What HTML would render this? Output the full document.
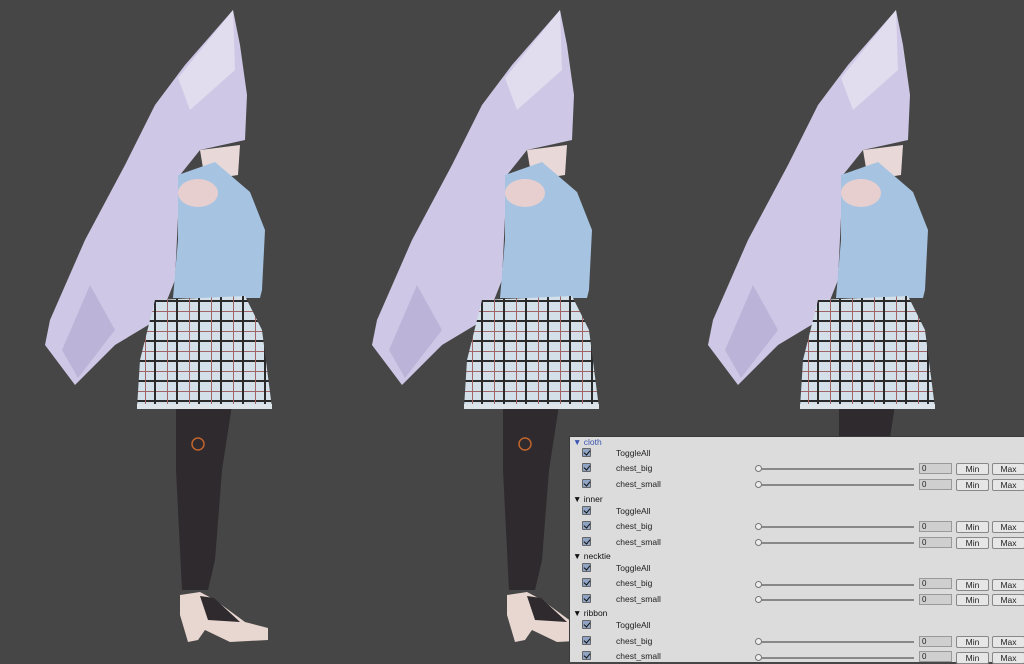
<!DOCTYPE html>
<html><head><meta charset="utf-8"><style>
*{margin:0;padding:0;box-sizing:border-box}
body{width:1024px;height:662px;overflow:hidden;background:#464646;position:relative;font-family:"Liberation Sans",sans-serif}
svg.s{position:absolute;left:0;top:0}
#p{position:absolute;left:569px;top:436px;width:455px;height:226px;background:#dcdcdc;border-left:1px solid #3a3a3a;border-top:1px solid #3a3a3a}
.a{position:absolute;font-size:8.5px;color:#222;line-height:10px;white-space:nowrap}
.h{left:3px;color:#111}
.h.b{color:#3a55b0}
.cb{position:absolute;left:12px;width:9px;height:9px;background:#8fa3c4;border:1px solid #666;border-radius:1px}
.cb::after{content:"";position:absolute;left:2px;top:0px;width:3px;height:5px;border:solid #111;border-width:0 1.5px 1.5px 0;transform:rotate(40deg)}
.sl{position:absolute;left:188px;width:156px;height:2px;background:#888}
.th{position:absolute;left:185px;width:7px;height:7px;border-radius:50%;background:#eee;border:1px solid #777}
.f{position:absolute;left:349px;width:33px;height:11px;background:#cfcfcf;border:1px solid #999;font-size:8px;padding-left:2px;line-height:9px;color:#222}
.bt{position:absolute;width:33px;height:12px;background:#e6e6e6;border:1px solid #888;border-radius:2px;font-size:8.5px;text-align:center;line-height:10px;color:#222}
</style></head><body>
<svg class="s" width="1024" height="662" viewBox="0 0 1024 662">
<defs>
<pattern id="pl" width="22" height="20" patternUnits="userSpaceOnUse">
<rect width="22" height="20" fill="#d3e0ea"/>
<rect x="0" y="0" width="22" height="2" fill="#2a2a2a"/>
<rect x="0" y="11" width="22" height="1" fill="#a06464"/>
<rect x="0" y="0" width="2" height="20" fill="#2a2a2a"/>
<rect x="13" y="0" width="1" height="20" fill="#a06464"/>
</pattern>
<g id="girl">
<path d="M233,10 L185,65 L155,105 L125,165 L85,240 L50,320 L45,345 L75,385 L115,345 L160,318 L175,280 L180,175 L200,150 L245,140 L247,95 L240,45 Z" fill="#cec7e5"/>
<path d="M90,285 L62,350 L78,378 L115,330 Z" fill="#bcb4d8"/>
<path d="M233,10 L235,70 L190,110 L178,78 Z" fill="#e2dcef"/>
<path d="M200,150 L240,145 L238,175 L205,180 Z" fill="#e8d8d8"/>
<path d="M178,175 L215,162 L250,192 L265,230 L262,290 L260,298 L173,298 L178,240 Z" fill="#a6c4e2"/>
<ellipse cx="198" cy="193" rx="20" ry="14" fill="#e8cfcf"/>
<path d="M232,405 L176,405 L176,470 L182,590 L208,590 L215,560 L222,470 Z" fill="#2e2a2d"/>
<path d="M155,300 L245,296 L262,330 L272,408 L137,408 L140,360 Z" fill="url(#pl)"/>
<path d="M137,404 L272,404 L272,409 L137,409 Z" fill="#dde4ea"/>
<circle cx="198" cy="444" r="6" fill="none" stroke="#c0642c" stroke-width="1.5"/>
<path d="M180,595 L200,592 L215,600 L245,622 L268,628 L268,640 L230,642 L205,630 L198,640 L188,642 L180,615 Z" fill="#e8d6d0"/>
<path d="M200,596 L214,598 L240,622 L208,620 Z" fill="#2e2a2d"/>
</g>
</defs>
<use href="#girl"/>
<use href="#girl" x="327"/>
<use href="#girl" x="663"/>
</svg>
<div id="p">
<div class="a h b" style="top:0px">▼ cloth</div>
<div class="cb" style="top:11px"></div><div class="a" style="left:46px;top:11px">ToggleAll</div>
<div class="cb" style="top:26px"></div><div class="a" style="left:46px;top:26px">chest_big</div>
<div class="sl" style="top:31px"></div><div class="th" style="top:28px"></div><div class="f" style="top:26px">0</div><div class="bt" style="left:386px;top:26px">Min</div><div class="bt" style="left:422px;top:26px">Max</div>
<div class="cb" style="top:42px"></div><div class="a" style="left:46px;top:42px">chest_small</div>
<div class="sl" style="top:47px"></div><div class="th" style="top:44px"></div><div class="f" style="top:42px">0</div><div class="bt" style="left:386px;top:42px">Min</div><div class="bt" style="left:422px;top:42px">Max</div>

<div class="a h" style="top:57px">▼ inner</div>
<div class="cb" style="top:69px"></div><div class="a" style="left:46px;top:69px">ToggleAll</div>
<div class="cb" style="top:84px"></div><div class="a" style="left:46px;top:84px">chest_big</div>
<div class="sl" style="top:89px"></div><div class="th" style="top:86px"></div><div class="f" style="top:84px">0</div><div class="bt" style="left:386px;top:84px">Min</div><div class="bt" style="left:422px;top:84px">Max</div>
<div class="cb" style="top:100px"></div><div class="a" style="left:46px;top:100px">chest_small</div>
<div class="sl" style="top:105px"></div><div class="th" style="top:102px"></div><div class="f" style="top:100px">0</div><div class="bt" style="left:386px;top:100px">Min</div><div class="bt" style="left:422px;top:100px">Max</div>

<div class="a h" style="top:114px">▼ necktie</div>
<div class="cb" style="top:126px"></div><div class="a" style="left:46px;top:126px">ToggleAll</div>
<div class="cb" style="top:141px"></div><div class="a" style="left:46px;top:141px">chest_big</div>
<div class="sl" style="top:147px"></div><div class="th" style="top:144px"></div><div class="f" style="top:141px">0</div><div class="bt" style="left:386px;top:142px">Min</div><div class="bt" style="left:422px;top:142px">Max</div>
<div class="cb" style="top:157px"></div><div class="a" style="left:46px;top:157px">chest_small</div>
<div class="sl" style="top:162px"></div><div class="th" style="top:159px"></div><div class="f" style="top:157px">0</div><div class="bt" style="left:386px;top:157px">Min</div><div class="bt" style="left:422px;top:157px">Max</div>

<div class="a h" style="top:171px">▼ ribbon</div>
<div class="cb" style="top:183px"></div><div class="a" style="left:46px;top:183px">ToggleAll</div>
<div class="cb" style="top:199px"></div><div class="a" style="left:46px;top:199px">chest_big</div>
<div class="sl" style="top:204px"></div><div class="th" style="top:201px"></div><div class="f" style="top:199px">0</div><div class="bt" style="left:386px;top:199px">Min</div><div class="bt" style="left:422px;top:199px">Max</div>
<div class="cb" style="top:214px"></div><div class="a" style="left:46px;top:214px">chest_small</div>
<div class="sl" style="top:220px"></div><div class="th" style="top:217px"></div><div class="f" style="top:214px">0</div><div class="bt" style="left:386px;top:215px">Min</div><div class="bt" style="left:422px;top:215px">Max</div>
</div>
</body></html>
